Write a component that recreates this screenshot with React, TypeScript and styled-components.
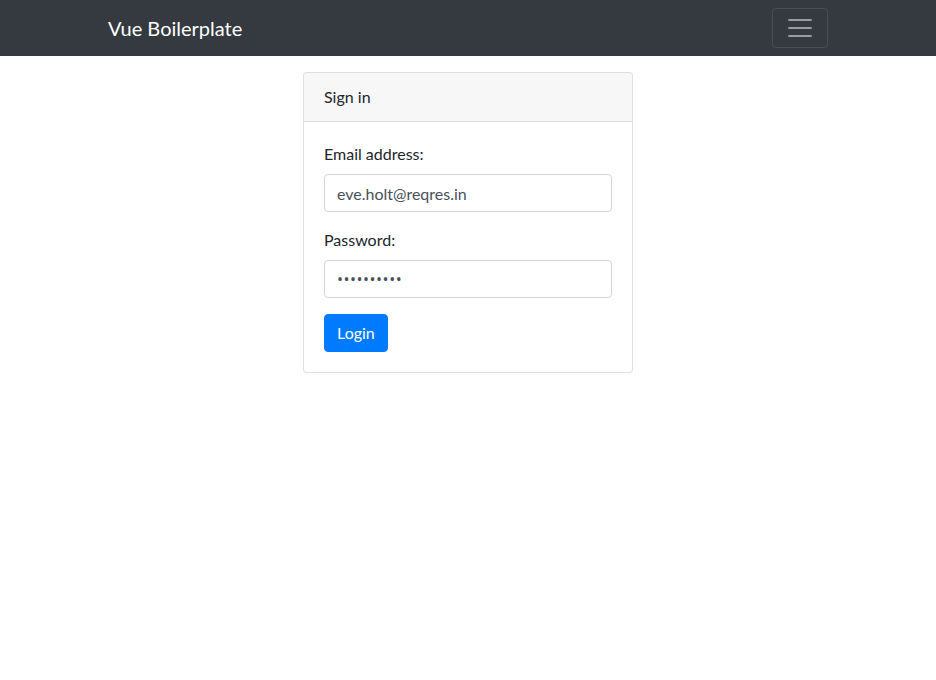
import React from "react";
import styled, { createGlobalStyle, css } from "styled-components";

const Global = createGlobalStyle`
  *, *::before, *::after { box-sizing: border-box; }
  body {
    margin: 0;
    font-family: "Lato", "Open Sans", sans-serif;
    font-size: 16px;
    line-height: 1.5;
    color: #212529;
    background: #fff;
  }
`;

const Navbar = styled.nav`
  background: #343a40;
  padding: 8px 0;
`;

const NavInner = styled.div`
  width: 720px;
  margin: 0 auto;
  display: flex;
  align-items: center;
  justify-content: space-between;
`;

const Brand = styled.a`
  color: #fff;
  font-size: 20px;
  line-height: 30px;
  padding: 5px 0;
  text-decoration: none;
  white-space: nowrap;
`;

const Toggler = styled.button`
  display: flex;
  align-items: center;
  justify-content: center;
  width: 56px;
  height: 40px;
  padding: 4px 12px;
  background: transparent;
  border: 1px solid rgba(255, 255, 255, 0.1);
  border-radius: 4px;
  cursor: pointer;
`;

const Main = styled.div`
  display: flex;
  justify-content: center;
  padding-top: 16px;
`;

const Card = styled.div`
  width: 330px;
  border: 1px solid rgba(0, 0, 0, 0.125);
  border-radius: 4px;
  background: #fff;
`;

const CardHeader = styled.div`
  padding: 12px 20px;
  background: rgba(0, 0, 0, 0.03);
  border-bottom: 1px solid rgba(0, 0, 0, 0.125);
  border-radius: 3px 3px 0 0;
`;

const CardBody = styled.form`
  padding: 20px;
`;

const FormGroup = styled.div`
  margin-bottom: 16px;
  display: flex;
  flex-direction: column;
`;

const Label = styled.label`
  margin-bottom: 8px;
`;

const Input = styled.input<{ $secret?: boolean }>`
  height: 38px;
  width: 100%;
  padding: 6px 12px;
  font: inherit;
  font-size: 16px;
  color: #495057;
  background: #fff;
  border: 1px solid #ced4da;
  border-radius: 4px;
  outline: none;
  ${(p) =>
    p.$secret &&
    css`
      font-family: "Open Sans", sans-serif;
      letter-spacing: 0.5px;
    `}
`;

const Button = styled.button`
  height: 38px;
  padding: 6px 12px;
  font: inherit;
  font-size: 16px;
  color: #fff;
  background: #007bff;
  border: 1px solid #007bff;
  border-radius: 4px;
  cursor: pointer;
`;

export default function App() {
  return (
    <>
      <Global />
      <Navbar>
        <NavInner>
          <Brand href="#">Vue Boilerplate</Brand>
          <Toggler type="button" aria-label="Toggle navigation">
            <svg width="30" height="30" viewBox="0 0 30 30">
              <path
                d="M4 7h22M4 15h22M4 23h22"
                stroke="rgba(255,255,255,0.5)"
                strokeWidth="2"
                strokeLinecap="round"
                strokeMiterlimit="10"
              />
            </svg>
          </Toggler>
        </NavInner>
      </Navbar>
      <Main>
        <Card>
          <CardHeader>Sign in</CardHeader>
          <CardBody onSubmit={(e) => e.preventDefault()}>
            <FormGroup>
              <Label htmlFor="email">Email address:</Label>
              <Input id="email" type="email" defaultValue="eve.holt@reqres.in" />
            </FormGroup>
            <FormGroup>
              <Label htmlFor="password">Password:</Label>
              <Input id="password" type="password" $secret defaultValue="cityslicka" />
            </FormGroup>
            <Button type="submit">Login</Button>
          </CardBody>
        </Card>
      </Main>
    </>
  );
}
